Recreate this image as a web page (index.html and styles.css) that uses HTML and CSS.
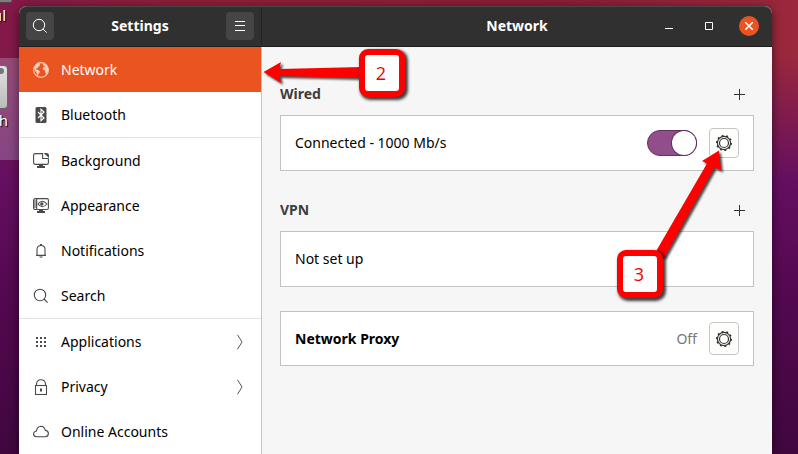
FILE: index.html
```
<!DOCTYPE html>
<html lang="en">
<head>
<meta charset="utf-8" />
<title>Settings - Network</title>
<link rel="stylesheet" href="styles.css">
</head>

<body>
<!-- desktop icons behind the window -->
<div class="desktop">
    <div class="icon-top"></div>
    <span class="label label-top">ul</span>
    <div class="selected"></div>
    <div class="drive"></div>
    <span class="label label-drive">h</span>
</div>

<div class="window">
    <!-- title bar -->
    <header class="titlebar">
        <div class="title-left">
            <button class="tool" type="button" aria-label="Search">
                <svg width="16" height="16" viewBox="0 0 16 16"><circle cx="7" cy="7" r="5.7"/><path d="M11 11l3.6 3.6"/></svg>
            </button>
            <h1>Settings</h1>
            <button class="tool" type="button" aria-label="Menu">
                <svg width="16" height="16" viewBox="0 0 16 16"><path d="M3 3.5h10M3 7.5h10M3 12.5h10"/></svg>
            </button>
        </div>
        <div class="title-right">
            <h1>Network</h1>
            <div class="controls">
                <button type="button" aria-label="Minimize"><svg width="20" height="20" viewBox="0 0 20 20"><path d="M6 12.5h8"/></svg></button>
                <button type="button" aria-label="Maximize"><svg width="20" height="20" viewBox="0 0 20 20"><path d="M6.5 6.5h7v7h-7z"/></svg></button>
                <button class="close" type="button" aria-label="Close"><svg width="20" height="20" viewBox="0 0 20 20"><path d="M6.3 6.3l7.4 7.4M13.7 6.3l-7.4 7.4"/></svg></button>
            </div>
        </div>
    </header>

    <div class="content">
        <!-- sidebar -->
        <nav class="sidebar">
            <ul>
                <li><a class="active" href="#network">
                    <svg class="ico" viewBox="0 0 16 16"><circle cx="8" cy="8" r="7.4"/><path class="fill" d="M1 5.5L3 2.500 6.500 1l.8 1-.8 1.300.3.900-1.600.6-.8 1.400-1.200.6.2 1 2 .2 1.600 1.400-.6 1.700-1 1-.4 2-.9-.4-.5-2.800-1.300-1.600-.2-1.500-1.300-1zM10 2l1.600-.4L14 3.500l1.200 3-.2 3-1.400 2.600-.8-.1-.7-2.400.3-1.200-1.900-.3-.9-1.500.7-1.400 1.400-.5-.4-1.200-1.200.2z"/></svg>
                    Network</a></li>
                <li><a href="#bluetooth">
                    <svg class="ico" viewBox="0 0 16 16"><rect class="fill" x="2.5" y="0" width="11" height="16" rx="1.5"/><path class="light" d="M5 5l6 6-3 2.7V2.3L11 5l-6 6"/></svg>
                    Bluetooth</a></li>
                <li class="line"><a href="#background">
                    <svg class="ico" viewBox="0 0 16 16"><path d="M10 .6H2.3Q.6.6.6 2.3v7.4q0 1.7 1.7 1.7h11.4q1.7 0 1.7-1.7V5.5"/><path d="M9.6.6v4.9h5.8"/><path class="fill" d="M10.6 0h2.9q2.5 0 2.5 2.5V5zM6 11.5h4V13h2v2H4v-2h2z"/></svg>
                    Background</a></li>
                <li><a href="#appearance">
                    <svg class="ico" viewBox="0 0 16 16"><rect x=".6" y=".6" width="14.8" height="10.9" rx="1.5"/><path d="M3.7.6v11M.5 3h3M.5 5h3M.5 7h3M.5 9h3M5 6q4-5.4 9 0-5 5.4-9 0z"/><circle class="fill" cx="8.8" cy="6" r="1.7"/><path class="fill" d="M6 11.5h4V13h2v2H4v-2h2z"/></svg>
                    Appearance</a></li>
                <li><a href="#notifications">
                    <svg class="ico" viewBox="0 0 16 16"><path d="M3 12.4h10M4 12V6.600Q4 2.500 8 2.500t4 4.100V12"/><path class="fill" d="M7 1h2v1.500H7zM6 13.500h4q-2 2.500-4 0z"/></svg>
                    Notifications</a></li>
                <li><a href="#search">
                    <svg class="ico" viewBox="0 0 16 16"><circle cx="7" cy="7" r="5.7"/><path d="M11 11l3.6 3.6"/></svg>
                    Search</a></li>
                <li class="line"><a href="#applications">
                    <svg class="ico" viewBox="0 0 16 16"><path class="fill" d="M3 3h2v2H3zM7 3h2v2H7zM11 3h2v2h-2zM3 7h2v2H3zM7 7h2v2H7zM11 7h2v2h-2zM3 11h2v2H3zM7 11h2v2H7zM11 11h2v2h-2z"/></svg>
                    Applications
                    <svg class="chevron" viewBox="0 0 8 16"><path d="M1.5.8L6 8l-4.500 7.200"/></svg></a></li>
                <li><a href="#privacy">
                    <svg class="ico" viewBox="0 0 16 16"><rect x="2.5" y="6.5" width="11" height="9"/><path d="M3.5 6.500V5Q3.800.8 8 .8T12.500 5v1.500"/><path class="fill" d="M7 9.500h2v3H7z"/></svg>
                    Privacy
                    <svg class="chevron" viewBox="0 0 8 16"><path d="M1.5.8L6 8l-4.500 7.200"/></svg></a></li>
                <li><a href="#accounts">
                    <svg class="ico" viewBox="0 0 16 16"><path d="M3.5 12.700Q.6 12.500.6 9.900.6 7.500 3.500 7 4 2.500 8 2.300q3.200.1 4.200 3.800 3.200.7 3.200 3.500 0 3-3 3.100z"/></svg>
                    Online Accounts</a></li>
            </ul>
        </nav>

        <!-- network panel -->
        <main class="panel">
            <section>
                <div class="head">
                    <h2>Wired</h2>
                    <button class="add" type="button" aria-label="Add wired connection"><svg width="12" height="12" viewBox="0 0 12 12"><path d="M6.5 1v11M1 6.500h11"/></svg></button>
                </div>
                <div class="card">
                    <label for="wired">Connected - 1000 Mb/s</label>
                    <input class="switch" id="wired" type="checkbox" checked />
                    <button class="gear" type="button" aria-label="Wired options">
                        <svg width="16" height="16" viewBox="0 0 16 16"><circle cx="8" cy="8" r="6.6"/><circle cx="8" cy="8" r="4.5"/><circle class="teeth" cx="8" cy="8" r="7.3" pathLength="100"/></svg>
                    </button>
                </div>
            </section>
            <section>
                <div class="head">
                    <h2>VPN</h2>
                    <button class="add" type="button" aria-label="Add VPN"><svg width="12" height="12" viewBox="0 0 12 12"><path d="M6.5 1v11M1 6.500h11"/></svg></button>
                </div>
                <div class="card">
                    <span class="name">Not set up</span>
                </div>
            </section>
            <section class="proxy">
                <div class="card">
                    <strong class="name">Network Proxy</strong>
                    <span class="state">Off</span>
                    <button class="gear tall" type="button" aria-label="Proxy options">
                        <svg width="16" height="16" viewBox="0 0 16 16"><circle cx="8" cy="8" r="6.6"/><circle cx="8" cy="8" r="4.5"/><circle class="teeth" cx="8" cy="8" r="7.3" pathLength="100"/></svg>
                    </button>
                </div>
            </section>
        </main>
    </div>
</div>

<!-- step markers -->
<div class="notes">
    <svg class="arrows" width="798" height="454" viewBox="0 0 798 454">
        <path d="M263.5 72L281 62l-1.500 7L362 67v11l-82.500-2 1.500 7z"/>
        <path d="M719 150.500L702 161l5 2.500L655 253l9 5 50.500-90.500 6.500 3z"/>
    </svg>
    <div class="step step-2">2</div>
    <div class="step step-3">3</div>
</div>
</body>
</html>
```
FILE: styles.css
```
*{box-sizing:border-box;}
body,ul,h1,h2{padding:0; margin:0;}
li{list-style:none;}
body{min-height:100vh; padding:6px 26px 0 19px; position:relative; overflow:hidden; font:15px/20px "Noto Sans","Open Sans",sans-serif; color:#000; background:linear-gradient(to bottom,rgba(90,8,90,0) 12%,#640f60 40%,#53084f 65%,#40073f 100%),linear-gradient(to right,#83194a,#8d1f3b 20%,#8a1f38 70%,#9b283c);}
button{padding:0; border:none; background:none; font:inherit; cursor:pointer;}
svg{display:block; fill:none; stroke:currentColor; stroke-width:1;}

/* desktop */
.desktop{position:absolute; left:0; top:0; width:19px; height:100%; overflow:hidden;}
.icon-top{position:absolute; left:0; top:0; width:12px; height:3px; background:#85777c; border-bottom:1px solid #4c4448; border-radius:0 0 5px 0;}
.selected{position:absolute; left:0; top:58px; width:19px; height:102px; background:rgba(190,170,205,.35);}
.drive{position:absolute; left:-22px; top:65px; width:30px; height:44px; background:linear-gradient(#e2e2e2,#bbb); border:1px solid #666; border-radius:4px;}
.drive:after{content:""; position:absolute; right:3px; top:2px; width:7px; height:6px; background:#777; border-radius:4px;}
.label{position:absolute; color:#fff; text-shadow:1px 1px 1px #000;}
.label-top{right:13px; top:5px;}
.label-drive{right:11px; top:110px;}

/* window */
.window{position:relative; display:flex; flex-direction:column; min-height:calc(100vh - 6px); background:#f6f6f6; border-radius:8px 8px 0 0; box-shadow:0 2px 10px 1px rgba(0,0,0,.45);}
.titlebar{display:flex; height:41px; padding-bottom:1px; background:#303030; border-top:1px solid #484848; border-bottom:1px solid #1d1d1d; border-radius:8px 8px 0 0; color:#fff;}
.titlebar h1{flex:1; font-size:14px; line-height:20px; text-align:center;}
.title-left{display:flex; align-items:center; width:243px; padding:0 7px; border-right:1px solid #222;}
.tool{display:flex; align-items:center; justify-content:center; width:28px; height:28px; background:#454545; border-radius:4px; color:#fff;}
.title-right{position:relative; display:flex; flex:1; align-items:center;}
.controls{position:absolute; right:13px; display:flex; gap:20px;}
.controls button{width:20px; height:20px; color:#fff;}
.controls .close{background:#e95420; border-radius:50%;}
.close svg{stroke-width:1.6;}
.content{display:flex; flex:1;}

/* sidebar */
.sidebar{width:243px; background:#fff; border-right:1px solid #c4c4c4;}
.sidebar a{display:flex; align-items:center; gap:12px; height:45px; padding:0 17px 0 14px; color:#000; font-size:14px; text-decoration:none;}
.sidebar .line{border-top:1px solid #e2e2e2;}
.sidebar .active{background:#e95420; color:#fff;}
.ico{width:16px; height:16px; color:#4a4a4a; stroke-width:1.1;}
.active .ico{color:#fbcdba;}
.fill{fill:currentColor; stroke:none;}
.light{stroke:#fff;}
.chevron{width:8px; height:16px; margin-left:auto; color:#555;}

/* panel */
.panel{flex:1; padding:37px 18px 0;}
.panel section{margin-bottom:29px;}
.head{display:flex; align-items:center; justify-content:space-between; height:20px; margin-bottom:11px; padding-right:9px;}
.head h2{font-size:14px; line-height:20px; color:#3d3d3d;}
.add{color:#333;}
.add svg{overflow:visible;}
.card{display:flex; align-items:center; gap:12px; height:56px; padding:0 14px; background:#fff; border:1px solid #c2c2c2; font-size:14px;}
.card label,.card .name{flex:1;}
.panel .proxy{margin-top:-5px;}
.proxy .card{height:55px;}
.state{color:#777;}
.switch{appearance:none; width:50px; height:26px; margin:0; background:#ccc; border:1px solid #61305c; border-radius:13px; cursor:pointer;}
.switch:before{content:""; display:block; width:24px; height:24px; background:#fff; border-radius:50%;}
.switch:checked{background:#924d8b;}
.switch:checked:before{margin-left:auto; box-shadow:0 0 0 1px #61305c;}
.gear{display:flex; align-items:center; justify-content:center; width:30px; height:30px; background:#fdfdfb; border:1px solid #c6c6c2; border-radius:4px; color:#333;}
.gear svg{stroke-width:1.2;}
.tall{height:33px;}
.gear .teeth{stroke-width:1.6; stroke-dasharray:4 6;}

/* step markers */
.notes{position:absolute; left:0; top:0; pointer-events:none;}
.arrows{position:absolute; left:0; top:0; fill:#f00; stroke:none; filter:drop-shadow(2px 2px 1px rgba(0,0,0,.7));}
.step{position:absolute; width:46px; height:48px; padding-right:2px; background:#fff; border:6px solid #f00; border-radius:9px; color:#e00; font:400 18px/36px "Open Sans","Noto Sans",sans-serif; text-align:center; box-shadow:2px 2px 3px 1px rgba(0,0,0,.75);}
.step-2{left:359px; top:49px;}
.step-3{left:617px; top:250px;}
```
